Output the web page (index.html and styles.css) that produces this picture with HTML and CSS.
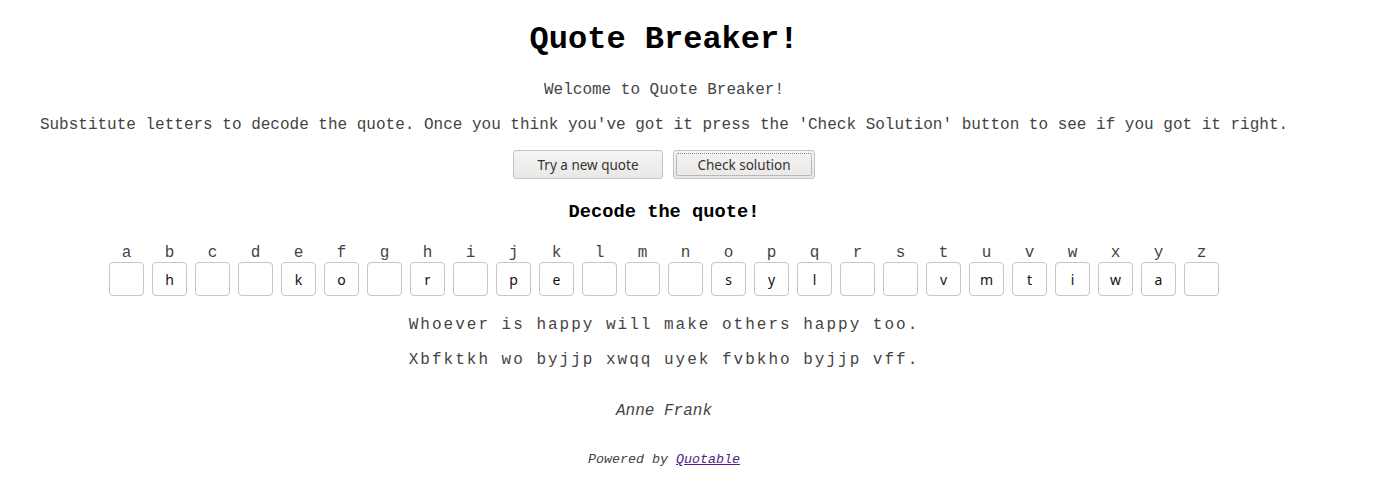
FILE: index.html
```html
<!DOCTYPE html>
<html lang="en">
<head>
<meta charset="utf-8">
<title>Quote Breaker!</title>
<link rel="stylesheet" href="styles.css">
</head>
<body>
<main class="page">
  <h1 class="title">Quote Breaker!</h1>
  <p class="intro">Welcome to Quote Breaker!</p>
  <p class="intro">Substitute letters to decode the quote. Once you think you've got it press the 'Check Solution' button to see if you got it right.</p>
  <div class="actions">
    <button class="btn">Try a new quote</button>
    <button class="btn btn-focus">Check solution</button>
  </div>
  <h3 class="subtitle">Decode the quote!</h3>
  <div class="alphabet">
    <div class="cell"><span class="label">a</span><span class="box"></span></div>
    <div class="cell"><span class="label">b</span><span class="box">h</span></div>
    <div class="cell"><span class="label">c</span><span class="box"></span></div>
    <div class="cell"><span class="label">d</span><span class="box"></span></div>
    <div class="cell"><span class="label">e</span><span class="box">k</span></div>
    <div class="cell"><span class="label">f</span><span class="box">o</span></div>
    <div class="cell"><span class="label">g</span><span class="box"></span></div>
    <div class="cell"><span class="label">h</span><span class="box">r</span></div>
    <div class="cell"><span class="label">i</span><span class="box"></span></div>
    <div class="cell"><span class="label">j</span><span class="box">p</span></div>
    <div class="cell"><span class="label">k</span><span class="box">e</span></div>
    <div class="cell"><span class="label">l</span><span class="box"></span></div>
    <div class="cell"><span class="label">m</span><span class="box"></span></div>
    <div class="cell"><span class="label">n</span><span class="box"></span></div>
    <div class="cell"><span class="label">o</span><span class="box">s</span></div>
    <div class="cell"><span class="label">p</span><span class="box">y</span></div>
    <div class="cell"><span class="label">q</span><span class="box">l</span></div>
    <div class="cell"><span class="label">r</span><span class="box"></span></div>
    <div class="cell"><span class="label">s</span><span class="box"></span></div>
    <div class="cell"><span class="label">t</span><span class="box">v</span></div>
    <div class="cell"><span class="label">u</span><span class="box">m</span></div>
    <div class="cell"><span class="label">v</span><span class="box">t</span></div>
    <div class="cell"><span class="label">w</span><span class="box">i</span></div>
    <div class="cell"><span class="label">x</span><span class="box">w</span></div>
    <div class="cell"><span class="label">y</span><span class="box">a</span></div>
    <div class="cell"><span class="label">z</span><span class="box"></span></div>
  </div>
  <p class="quote">Whoever is happy will make others happy too.</p>
  <p class="quote">Xbfktkh wo byjjp xwqq uyek fvbkho byjjp vff.</p>
  <p class="author">Anne Frank</p>
  <p class="powered">Powered by <a class="link" href="#">Quotable</a></p>
</main>
</body>
</html>
```
FILE: styles.css
```css
html, body {
  background: #fff;
}
body {
  margin: 8px;
  font-family: "Liberation Mono", "Courier New", monospace;
  color: #444;
}
.page {
  width: 1312px;
  text-align: center;
}
.title {
  font-size: 32px;
  font-weight: bold;
  color: #000;
  margin: 13px 0 23px;
}
.intro {
  font-size: 16px;
  margin: 17px 0 16px;
}
.actions {
  display: flex;
  justify-content: center;
  gap: 10px;
  margin-top: 2px;
}
.btn {
  font-family: "Noto Sans", "Open Sans", sans-serif;
  font-size: 13.5px;
  color: #333;
  height: 29px;
  padding: 0 20px;
  border: 1px solid #c4c2bf;
  border-radius: 3px;
  background: linear-gradient(#f5f4f3, #e9e8e6);
  position: relative;
}
.btn:first-child {
  width: 150px;
}
.btn-focus {
  width: 142px;
  padding: 0 10px;
}
.btn-focus::after {
  content: "";
  position: absolute;
  inset: 2px;
  border: 1px dotted #888;
  border-radius: 2px;
}
.subtitle {
  font-size: 18.72px;
  font-weight: bold;
  color: #000;
  margin: 22px 0 22px;
}
.alphabet {
  display: flex;
  justify-content: center;
  gap: 8px;
}
.cell {
  display: flex;
  flex-direction: column;
  align-items: center;
  width: 35px;
}
.label {
  font-size: 16px;
  line-height: 17px;
}
.box {
  box-sizing: border-box;
  width: 35px;
  height: 34px;
  border: 1px solid #c9c6c3;
  border-radius: 4px;
  display: flex;
  align-items: center;
  justify-content: center;
  font-family: "Noto Sans", "Open Sans", sans-serif;
  font-size: 14px;
  color: #111;
}
.quote {
  font-size: 16px;
  letter-spacing: 2px;
  margin: 20px 0 0;
}
.quote + .quote {
  margin-top: 17px;
}
.author {
  font-style: italic;
  font-size: 16px;
  margin: 33px 0 0;
}
.powered {
  font-style: italic;
  font-size: 13.33px;
  margin: 32px 0 0;
}
.link {
  color: #551a8b;
}
```
